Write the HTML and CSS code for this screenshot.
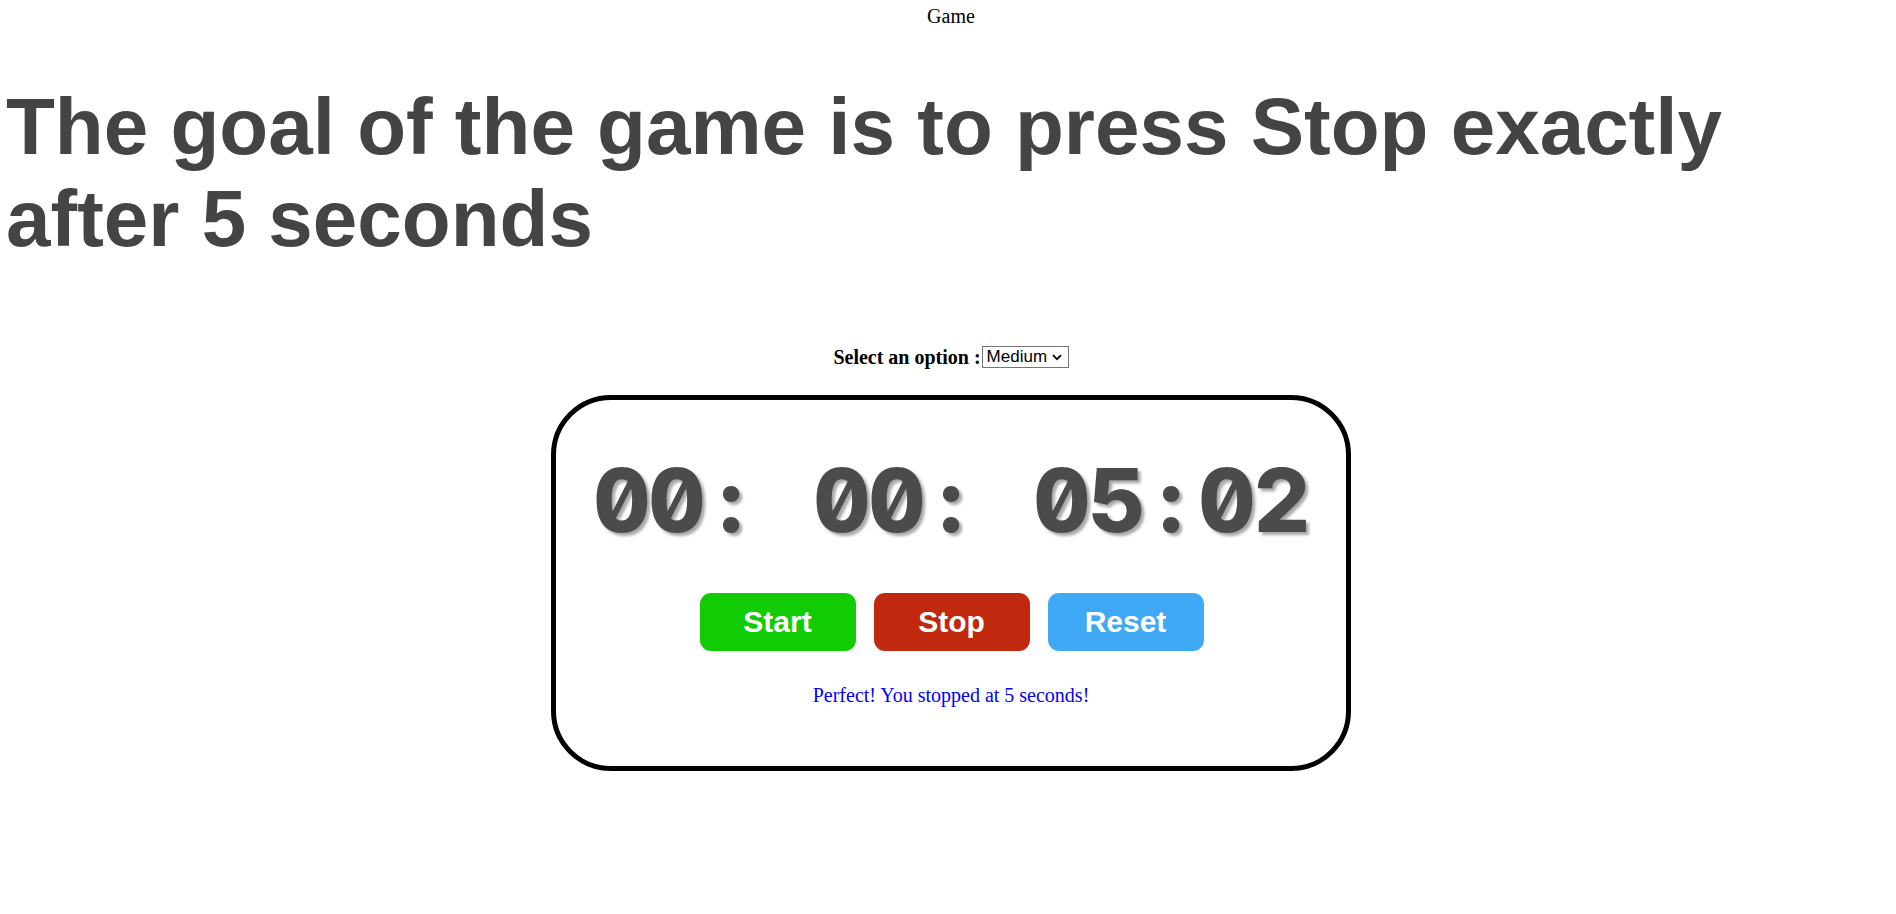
FILE: index.html
```html
<!DOCTYPE html>
<html lang="en">
<head>
<meta charset="utf-8">
<title>Game</title>
<link rel="stylesheet" href="styles.css">
</head>
<body>
<div class="top-title">Game</div>
<h1 class="headline">The goal of the game is to press Stop exactly after 5 seconds</h1>
<div class="option-row">
  <label class="option-label" for="level">Select an option :</label>
  <span class="select-wrap">
    <select class="option-select" id="level">
      <option>Easy</option>
      <option selected>Medium</option>
      <option>Hard</option>
    </select>
    <svg class="select-arrow" width="10" height="7" viewBox="0 0 10 7"><path d="M1 1.2 L5 5.2 L9 1.2" fill="none" stroke="#000" stroke-width="1.8"/></svg>
  </span>
</div>
<div class="stopwatch">
  <div class="clock"><span class="ch">0</span><span class="ch">0</span><span class="ch">:</span><span class="ch"> </span><span class="ch">0</span><span class="ch">0</span><span class="ch">:</span><span class="ch"> </span><span class="ch">0</span><span class="ch">5</span><span class="ch">:</span><span class="ch">0</span><span class="ch">2</span></div>
  <div class="controls">
    <button class="btn btn-start">Start</button>
    <button class="btn btn-stop">Stop</button>
    <button class="btn btn-reset">Reset</button>
  </div>
  <p class="message">Perfect! You stopped at 5 seconds!</p>
</div>
</body>
</html>
```
FILE: styles.css
```css
body {
  margin: 8px 0 8px 6px;
  font-family: "Liberation Serif", "Times New Roman", serif;
  background: #ffffff;
  color: #000000;
}

.top-title {
  text-align: center;
  font-size: 20px;
  line-height: 16px;
}

.headline {
  margin: 57px 0 0 0;
  font-family: "Liberation Sans", Arial, sans-serif;
  font-weight: bold;
  font-size: 80px;
  line-height: 92px;
  color: #444444;
}

.option-row {
  margin-top: 81px;
  display: flex;
  justify-content: center;
  align-items: flex-start;
  height: 23px;
}

.option-label {
  font-size: 20px;
  font-weight: bold;
  line-height: 23px;
}

.select-wrap {
  position: relative;
  display: inline-flex;
  margin-left: 1px;
}

.option-select {
  -webkit-appearance: none;
  appearance: none;
  box-sizing: border-box;
  width: 87px;
  height: 22px;
  font-family: "Liberation Sans", Arial, sans-serif;
  font-size: 17px;
  line-height: 20px;
  color: #000;
  background: #fff;
  border: 1px solid #767676;
  border-radius: 0;
  padding: 0 0 0 4px;
  margin: 0;
}

.select-arrow {
  position: absolute;
  right: 7px;
  top: 8px;
  pointer-events: none;
}

.stopwatch {
  box-sizing: border-box;
  width: 800px;
  margin: 26px auto 0 auto;
  border: 5px solid #000000;
  border-radius: 60px;
  padding: 45px 0 59px 0;
  text-align: center;
}

.clock {
  font-family: Inter, "DejaVu Sans Mono", monospace;
  font-weight: 800;
  font-size: 88px;
  line-height: 110px;
  color: #4b4b4b;
  font-variant-numeric: tabular-nums slashed-zero;
  font-feature-settings: "tnum" 1, "zero" 1;
  text-shadow: 3px 3px 3px rgba(0, 0, 0, 0.35);
  white-space: pre;
}

.ch {
  display: inline-block;
  width: 55px;
  text-align: center;
}

.controls {
  margin-top: 38px;
  display: flex;
  justify-content: center;
  gap: 18px;
  padding-left: 1px;
}

.btn {
  width: 156px;
  height: 58px;
  border: none;
  border-radius: 11px;
  font-family: "Liberation Sans", Arial, sans-serif;
  font-weight: bold;
  font-size: 30px;
  color: #ffffff;
  cursor: pointer;
  padding: 0;
}

.btn-start { background: #11cc02; }
.btn-stop { background: #c1290e; }
.btn-reset { background: #40a9f5; }

.message {
  margin: 33px 0 0 0;
  font-size: 20px;
  line-height: 23px;
  color: #0000ff;
}
```
